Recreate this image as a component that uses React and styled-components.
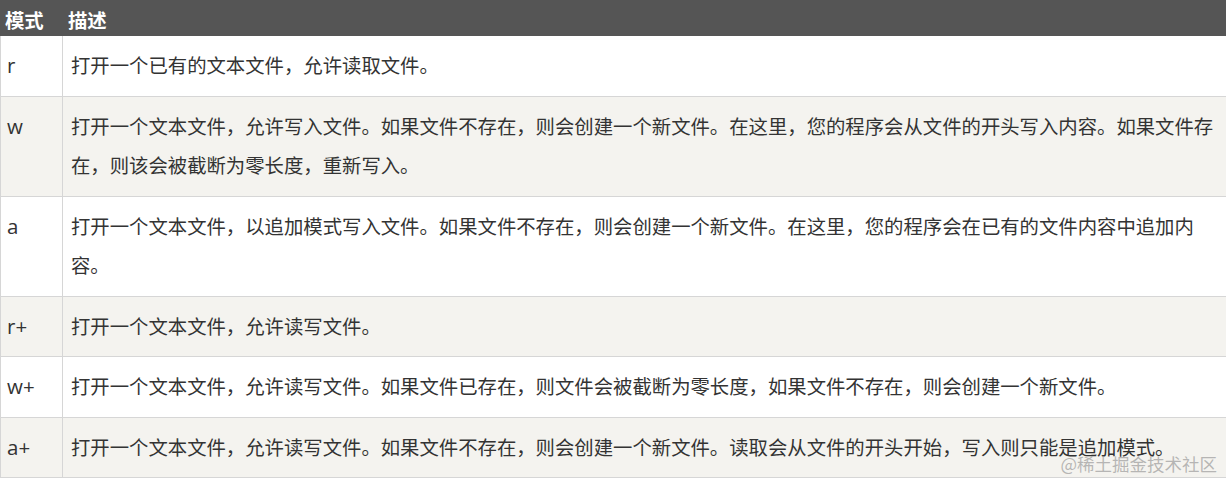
import React from "react";
import styled, { createGlobalStyle } from "styled-components";

const Global = createGlobalStyle`
  html, body { margin: 0; padding: 0; background: #fff; }
  body { overflow: hidden; }
`;

const Wrap = styled.div`
  position: relative;
  width: 1226px;
  overflow: hidden;
  font-family: "Open Sans", "Noto Sans CJK SC", sans-serif;
  color: #333;
`;

const Table = styled.table`
  width: 1226px;
  table-layout: fixed;
  border-collapse: separate;
  border-spacing: 0;
  font-size: 19.36px;
`;

const HeadCell = styled.th`
  background: #555555;
  color: #fff;
  font-weight: 700;
  text-align: left;
  height: 36px;
  padding: 4px 5px 0 ${(p) => (p.$first ? 5 : 6)}px;
  line-height: 32px;
  box-sizing: border-box;
  font-family: "Noto Sans CJK SC", sans-serif;
`;

const Row = styled.tr`
  background: ${(p) => (p.$alt ? "#f4f3ef" : "#ffffff")};
`;

const Cell = styled.td`
  border-bottom: 1px solid #d6d6d6;
  border-left: 1px solid #d6d6d6;
  padding: 10px 9px 10px ${(p) => (p.$mode ? 6 : 8)}px;
  font-size: ${(p) => (p.$mode ? "20.5px" : "19.36px")};
  line-height: 39.5px;
  vertical-align: top;
  word-break: break-all;
`;

const Mark = styled.div`
  position: absolute;
  right: 9px;
  bottom: 6px;
  font-family: "Noto Sans CJK SC", sans-serif;
  font-size: 17.5px;
  line-height: 1;
  color: rgba(140, 140, 140, 0.6);
  pointer-events: none;
`;

const rows = [
  ["r", "打开一个已有的文本文件，允许读取文件。"],
  ["w", "打开一个文本文件，允许写入文件。如果文件不存在，则会创建一个新文件。在这里，您的程序会从文件的开头写入内容。如果文件存在，则该会被截断为零长度，重新写入。"],
  ["a", "打开一个文本文件，以追加模式写入文件。如果文件不存在，则会创建一个新文件。在这里，您的程序会在已有的文件内容中追加内容。"],
  ["r+", "打开一个文本文件，允许读写文件。"],
  ["w+", "打开一个文本文件，允许读写文件。如果文件已存在，则文件会被截断为零长度，如果文件不存在，则会创建一个新文件。"],
  ["a+", "打开一个文本文件，允许读写文件。如果文件不存在，则会创建一个新文件。读取会从文件的开头开始，写入则只能是追加模式。"],
];

export default function App() {
  return (
    <Wrap>
      <Global />
      <Table>
        <colgroup>
          <col style={{ width: "62px" }} />
          <col />
        </colgroup>
        <thead>
          <tr>
            <HeadCell $first>模式</HeadCell>
            <HeadCell>描述</HeadCell>
          </tr>
        </thead>
        <tbody>
          {rows.map(([m, d], i) => (
            <Row key={m} $alt={i % 2 === 1}>
              <Cell $mode>{m}</Cell>
              <Cell>{d}</Cell>
            </Row>
          ))}
        </tbody>
      </Table>
      <Mark>@稀土掘金技术社区</Mark>
    </Wrap>
  );
}
